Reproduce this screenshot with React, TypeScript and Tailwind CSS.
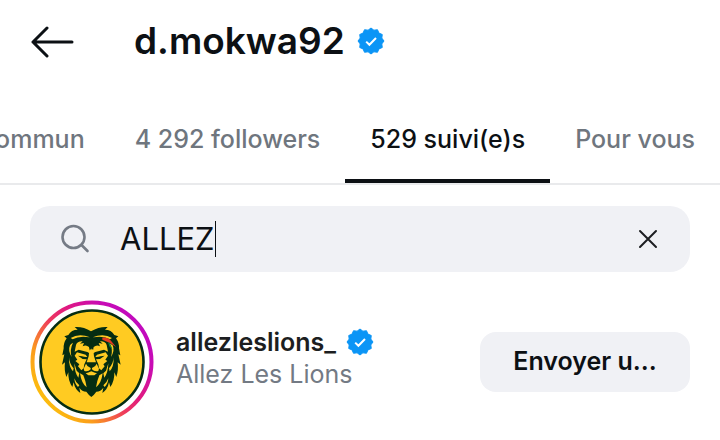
import React from "react";

const Verified = ({ className }: { className: string }) => {
  const points = Array.from({ length: 24 }, (_, i) => {
    const a = (i * Math.PI) / 12 - Math.PI / 2;
    const r = i % 2 ? 11.2 : 13;
    return `${14 + r * Math.cos(a)},${14 + r * Math.sin(a)}`;
  }).join(" ");
  return (
    <svg viewBox="0 0 28 28" className={className} role="img" aria-label="Compte vérifié">
      <polygon points={points} fill="#0b95f6" stroke="#0b95f6" strokeWidth="1" strokeLinejoin="round" />
      <path d="M9.2 14.6l3.2 3.2 6.6-6.8" fill="none" stroke="#fff" strokeWidth="2" />
    </svg>
  );
};

const Lion = () => (
  <g transform="translate(28 23) scale(0.33333)">
    <path
      fill="#052d12"
      d="M50 12Q76 10 99 25Q124 10 149 12L141 20Q160 20 169 36L181 40L174 46Q184 60 183 76L187 97L181 94L188 125L179 118Q182 142 175 162L169 148Q170 174 157 192L153 178Q149 200 133 210L136 194Q128 206 115 206Q108 216 100 222Q92 216 85 206Q72 206 64 194L67 210Q51 200 47 178L43 192Q30 174 31 148L25 162Q18 142 21 118L12 125L19 94L13 97L17 76Q16 60 26 46L19 40L31 36Q40 20 59 20Z"
    />
    <g fill="#ffcb22">
      <path d="M54 66Q58 54 74 55L66 62L78 60L74 70Q84 64 93 72L97 92L88 87L62 80L50 86Z" />
      <path d="M146 66Q142 54 126 55L134 62L122 60L126 70Q116 64 107 72L103 92L112 87L138 80L150 86Z" />
      <path d="M57 88L83 95L88 102Q80 103 72 100L60 98L74 108L86 109L79 124L77 136L70 142L60 130L64 124L52 114L58 110L50 98Z" />
      <path d="M143 88L117 95L112 102Q120 103 128 100L140 98L126 108L114 109L121 124L123 136L130 142L140 130L136 124L148 114L142 110L150 98Z" />
      <path d="M94 82L100 76L106 82L108 100L114 118H86L92 100Z" />
      <path d="M84 122Q87 131 98 135V139Q91 147 79 144L77 137Z" />
      <path d="M116 122Q113 131 102 135V139Q109 147 121 144L123 137Z" />
      <path d="M83 151Q91 150 100 145Q109 150 117 151L109 157H91Z" />
      <path d="M45 59Q34 81 41 102Q29 83 36 67Q38 62 45 59Z" />
      <path d="M155 61Q166 81 159 102Q171 83 164 67Z" />
      <path d="M33 103Q34 122 47 136L45 145Q32 132 33 103Z" />
      <path d="M167 103Q166 122 153 136L155 145Q168 132 167 103Z" />
      <path d="M49 121L56 143L64 151L61 164Q50 150 49 121Z" />
      <path d="M151 121L144 143L136 151L139 164Q150 150 151 121Z" />
      <path d="M66 151L76 157L82 174L86 193Q70 181 66 151Z" />
      <path d="M134 151L124 157L118 174L114 193Q130 181 134 151Z" />
      <path d="M49 166Q54 180 64 187L60 192Q50 184 49 166Z" />
      <path d="M151 166Q146 180 136 187L140 192Q150 184 151 166Z" />
      <path d="M38 45Q63 30 96 43Q63 37 44 49Z" />
      <path d="M162 45Q137 30 104 43Q137 37 156 49Z" />
    </g>
    <path d="M99 54l4 17-4 11-5-11z" fill="#052d12" />
    <path d="M133 44Q151 42 162 57L174 72Q157 58 133 50Z" fill="#e33b20" />
    <path d="M150 57Q159 64 163 80L154 70Z" fill="#138542" />
  </g>
);

const Avatar = () => (
  <svg viewBox="0 0 124 124" className="size-[124px] shrink-0" role="img" aria-label="Photo de profil de allezleslions_">
    <defs>
      <linearGradient id="story" x1="0.1" y1="0.9" x2="0.95" y2="0.2">
        <stop offset="0" stopColor="#fcc40c" />
        <stop offset="0.22" stopColor="#fb9d1c" />
        <stop offset="0.46" stopColor="#ee3a5c" />
        <stop offset="0.62" stopColor="#e01a80" />
        <stop offset="0.85" stopColor="#c80bb4" />
        <stop offset="1" stopColor="#c00ac0" />
      </linearGradient>
    </defs>
    <circle cx="62" cy="62" r="59.5" fill="#fff" stroke="url(#story)" strokeWidth="4" />
    <circle cx="62" cy="62" r="51.5" fill="#ffcb22" stroke="#052d12" strokeWidth="2.6" />
    <Lion />
  </svg>
);

const tabs = ["commun", "4 292 followers", "529 suivi(e)s", "Pour vous"];

export default function App() {
  return (
    <main className="w-full overflow-hidden bg-white font-['Inter',sans-serif] text-[#0c1014]">
      <header className="flex h-[84px] items-center pl-[30px]">
        <button type="button" aria-label="Retour">
          <svg viewBox="0 0 44 32" className="h-8 w-11" fill="none" stroke="currentColor" strokeWidth="3" strokeLinecap="round" strokeLinejoin="round">
            <path d="M42 16H3M17 2L3 16l14 14" />
          </svg>
        </button>
        <div className="ml-[60px] flex items-center gap-3 pb-[2px]">
          <h1 className="text-[37px] font-semibold leading-10">d.mokwa92</h1>
          <Verified className="size-7" />
        </div>
      </header>

      <nav role="tablist" className="flex h-[101px] justify-end border-b-2 border-[#e9eaec]">
        {tabs.map((label) => (
          <button
            key={label}
            type="button"
            role="tab"
            aria-selected={label === "529 suivi(e)s"}
            className="shrink-0 border-b-4 border-transparent px-[25px] pt-4 text-[25px] font-medium whitespace-nowrap text-[#6f767e] aria-selected:border-[#0c1014] aria-selected:text-[#0c1014]"
          >
            {label}
          </button>
        ))}
      </nav>

      <section className="px-[30px] pt-[21px]">
        <div className="flex h-[66px] items-center rounded-[20px] bg-[#f0f1f5] px-[30px]">
          <svg viewBox="0 0 30 30" className="size-[30px] shrink-0" fill="none" stroke="#757b85" strokeWidth="2.6" strokeLinecap="round" aria-hidden="true">
            <circle cx="13.500" cy="13" r="11" />
            <path d="M21.500 21l6 6" />
          </svg>
          <div className="ml-[30px] flex min-w-0 flex-1 items-center">
            <input
              type="text"
              aria-label="Rechercher"
              defaultValue="ALLEZ"
              className="field-sizing-content bg-transparent text-[31px] leading-9 caret-transparent outline-none"
            />
            <span className="h-9 w-px bg-[#0c1014]" />
          </div>
          <button type="button" aria-label="Effacer">
            <svg viewBox="0 0 24 24" className="size-6" fill="none" stroke="#1c1e21" strokeWidth="2" strokeLinecap="round">
              <path d="M4 4l16 16M20 4L4 20" />
            </svg>
          </button>
        </div>

        <article className="mt-7 flex items-center">
          <Avatar />
          <div className="ml-[22px] min-w-0 flex-1 pb-2">
            <div className="flex items-center gap-2.5">
              <h2 className="text-[25px] leading-8 font-semibold text-[#1c1e21]">allezleslions_</h2>
              <Verified className="size-7" />
            </div>
            <p className="text-[25px] leading-8 text-[#737a84]">Allez Les Lions</p>
          </div>
          <button type="button" className="h-15 w-[210px] rounded-2xl bg-[#f0f1f5] text-[25px] font-semibold">
            Envoyer u...
          </button>
        </article>
      </section>
    </main>
  );
}
